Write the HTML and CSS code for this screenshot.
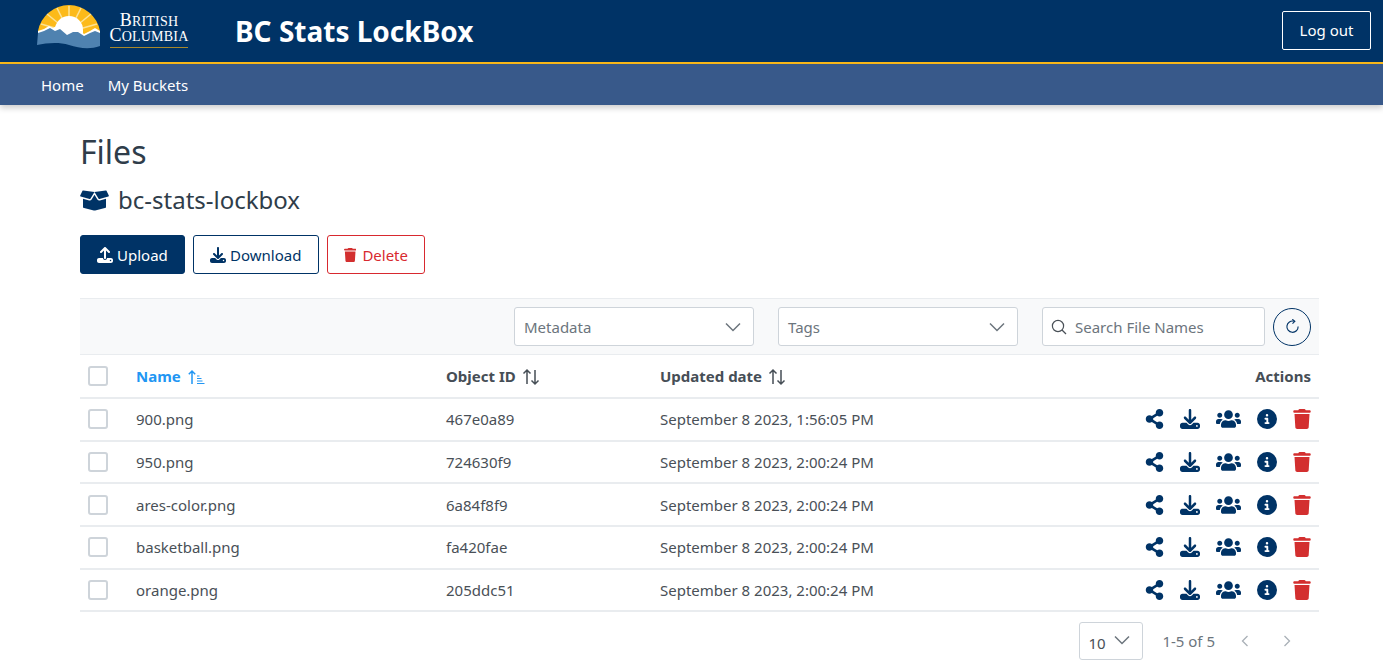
FILE: index.html
```html
<!DOCTYPE html>
<html lang="en">
<head>
<meta charset="utf-8">
<title>BC Stats LockBox</title>
<link rel="stylesheet" href="styles.css">
</head>
<body>
<svg class="defs" width="0" height="0" aria-hidden="true">
  <symbol id="i-share" viewBox="0 0 448 512"><path d="M352 320c-22.608 0-43.387 7.819-59.79 20.895l-102.486-64.054a96.551 96.551 0 0 0 0-41.683l102.486-64.054C308.613 184.181 329.392 192 352 192c53.019 0 96-42.981 96-96S405.019 0 352 0s-96 42.981-96 96c0 7.158.79 14.13 2.276 20.841L155.79 180.895C139.387 167.819 118.608 160 96 160c-53.019 0-96 42.981-96 96s42.981 96 96 96c22.608 0 43.387-7.819 59.79-20.895l102.486 64.054A96.301 96.301 0 0 0 256 416c0 53.019 42.981 96 96 96s96-42.981 96-96-42.981-96-96-96z"/></symbol>
  <symbol id="i-download" viewBox="0 0 512 512"><path d="M288 32c0-17.7-14.3-32-32-32s-32 14.3-32 32V274.7l-73.4-73.4c-12.5-12.5-32.8-12.5-45.3 0s-12.5 32.8 0 45.3l128 128c12.5 12.5 32.8 12.5 45.3 0l128-128c12.5-12.5 12.5-32.8 0-45.3s-32.8-12.5-45.3 0L288 274.7V32zM64 352c-35.3 0-64 28.7-64 64v32c0 35.3 28.7 64 64 64H448c35.3 0 64-28.7 64-64V416c0-35.3-28.7-64-64-64H346.5l-45.3 45.3c-25 25-65.5 25-90.5 0L165.5 352H64zm368 56a24 24 0 1 1 0 48 24 24 0 1 1 0-48z"/></symbol>
  <symbol id="i-upload" viewBox="0 0 512 512"><path d="M288 109.3V352c0 17.7-14.3 32-32 32s-32-14.3-32-32V109.3l-73.4 73.4c-12.5 12.5-32.8 12.5-45.3 0s-12.5-32.8 0-45.3l128-128c12.5-12.5 32.8-12.5 45.3 0l128 128c12.5 12.5 12.5 32.8 0 45.3s-32.8 12.5-45.3 0L288 109.3zM64 352H192c0 35.3 28.7 64 64 64s64-28.7 64-64H448c35.3 0 64 28.7 64 64v32c0 35.3-28.7 64-64 64H64c-35.3 0-64-28.7-64-64V416c0-35.3 28.7-64 64-64zM432 456a24 24 0 1 0 0-48 24 24 0 1 0 0 48z"/></symbol>
  <symbol id="i-trash" viewBox="0 0 448 512"><path d="M135.2 17.7L128 32H32C14.3 32 0 46.3 0 64S14.3 96 32 96H416c17.7 0 32-14.3 32-32s-14.3-32-32-32H320l-7.2-14.3C307.4 6.8 296.3 0 284.2 0H163.8c-12.1 0-23.2 6.8-28.6 17.7zM416 128H32L53.2 467c1.6 25.3 22.6 45 47.9 45H346.9c25.3 0 46.3-19.7 47.9-45L416 128z"/></symbol>
  <symbol id="i-info" viewBox="0 0 512 512"><path d="M256 512A256 256 0 1 0 256 0a256 256 0 1 0 0 512zM216 336h24V272H216c-13.3 0-24-10.7-24-24s10.7-24 24-24h48c13.3 0 24 10.7 24 24v88h8c13.3 0 24 10.7 24 24s-10.7 24-24 24H216c-13.3 0-24-10.7-24-24s10.7-24 24-24zm40-208a32 32 0 1 1 0 64 32 32 0 1 1 0-64z"/></symbol>
  <symbol id="i-users" viewBox="0 0 640 512"><path d="M96 224c35.3 0 64-28.7 64-64s-28.7-64-64-64-64 28.7-64 64 28.7 64 64 64zm448 0c35.3 0 64-28.7 64-64s-28.7-64-64-64-64 28.7-64 64 28.7 64 64 64zm32 32h-64c-17.6 0-33.5 7.1-45.1 18.6 40.3 22.1 68.9 62 75.1 109.4h66c17.7 0 32-14.3 32-32v-32c0-35.3-28.7-64-64-64zm-256 0c61.9 0 112-50.1 112-112S381.9 32 320 32 208 82.1 208 144s50.1 112 112 112zm76.8 32h-8.3c-20.8 10-43.9 16-68.5 16s-47.6-6-68.5-16h-8.3C179.6 288 128 339.6 128 403.2V432c0 26.5 21.5 48 48 48h288c26.5 0 48-21.5 48-48v-28.8c0-63.6-51.6-115.2-115.2-115.2zm-223.7-13.4C161.5 263.1 145.6 256 128 256H64c-35.3 0-64 28.7-64 64v32c0 17.7 14.3 32 32 32h65.9c6.3-47.4 34.9-87.3 75.2-109.4z"/></symbol>
  <symbol id="i-box" viewBox="0 0 640 512"><path d="M425.7 256c-16.9 0-32.8-9-41.4-23.4L320 126l-64.2 106.6c-8.7 14.5-24.6 23.5-41.5 23.5-4.5 0-9-.6-13.3-1.9L64 215v178c0 14.7 10 27.5 24.2 31l216.2 54.1c10.2 2.5 20.9 2.5 31 0L551.8 424c14.2-3.6 24.2-16.4 24.2-31V215l-137 39.1c-4.3 1.3-8.8 1.9-13.3 1.9zm212.6-112.2L586.8 41c-3.1-6.2-9.8-9.8-16.7-8.9L320 64l91.7 152.1c3.8 6.3 11.4 9.3 18.5 7.3l197.9-56.5c9.9-2.9 14.7-13.9 10.2-23.1zM53.2 41L1.7 143.8c-4.6 9.2.3 20.2 10.1 23l197.9 56.5c7.1 2 14.7-1 18.5-7.3L320 64 69.8 32.1c-6.9-.8-13.5 2.7-16.6 8.9z"/></symbol>
  <symbol id="i-sort" viewBox="0 0 18 18"><path d="M5 2v14M1.5 5.5 5 2l3.500 3.500M13 16V2M9.500 12.500 13 16l3.500-3.500" fill="none" stroke="currentColor" stroke-width="1.500"/></symbol>
  <symbol id="i-sort-up" viewBox="0 0 18 18"><path d="M5 3v13M1.800 6.200 5 3l3.200 3.200" fill="none" stroke="currentColor" stroke-width="1.500"/><path d="M10 8h2.500M10 10.500h4.500M10 13h5.500M10 15.500h7.500" fill="none" stroke="currentColor" stroke-width="1"/></symbol>
  <symbol id="i-chev" viewBox="0 0 16 10"><path d="M1 1.500 8 8.500l7-7" fill="none" stroke="currentColor" stroke-width="1.500"/></symbol>
</svg>

<header class="topbar">
  <div class="brand">
    <div class="logo">
      <svg class="logo-mark" viewBox="0 0 64 46" width="64" height="46" aria-hidden="true">
        <path d="M1 27A31.500 31.500 0 0 1 63 27V34H1z" fill="#fcba19"/>
        <g stroke="#fde9a8" stroke-width="1.600" opacity=".85">
          <path d="M32 28V2M32 28 20 4M32 28 44 4M32 28 10 10M32 28 54 10M32 28 4 20M32 28 60 20"/>
        </g>
        <path d="M18 26A14 14 0 0 1 46 26V32H18z" fill="#fff"/>
        <path d="M1 27 7 25 12 22 16 24 21 21 27 27 31 30 36 26 41 25 47 30 53 27 58 24 63 27V35H1z" fill="#fff"/>
        <path d="M1 29 7 27 13 24 18 27 23 25 30 31 36 28 41 28 47 32 53 29 58 27 63 29V42C52 46 42 44 32 41 22 38 10 39 0 41z" fill="#4f82b0"/>
      </svg>
      <div class="logo-text">
        <span class="logo-line">B<small>RITISH</small></span>
        <span class="logo-line logo-wide">C<small>OLUMBIA</small></span>
      </div>
    </div>
    <h1 class="app-title">BC Stats LockBox</h1>
  </div>
  <button class="logout">Log out</button>
</header>
<nav class="navbar">
  <a class="nav-link">Home</a>
  <a class="nav-link">My Buckets</a>
</nav>

<main class="content">
  <h2 class="page-title">Files</h2>
  <h3 class="bucket"><svg class="bucket-icon"><use href="#i-box"/></svg>bc-stats-lockbox</h3>
  <div class="actions">
    <button class="btn btn-primary"><svg class="btn-icon"><use href="#i-upload"/></svg>Upload</button>
    <button class="btn btn-outline"><svg class="btn-icon"><use href="#i-download"/></svg>Download</button>
    <button class="btn btn-danger"><svg class="btn-icon btn-icon-trash"><use href="#i-trash"/></svg>Delete</button>
  </div>

  <section class="filters">
    <div class="select"><span>Metadata</span><svg class="chev"><use href="#i-chev"/></svg></div>
    <div class="select"><span>Tags</span><svg class="chev"><use href="#i-chev"/></svg></div>
    <div class="search">
      <svg class="search-icon" viewBox="0 0 16 16"><circle cx="7" cy="7" r="5.600" fill="none" stroke="currentColor" stroke-width="1.200"/><path d="m11 11 4 4" stroke="currentColor" stroke-width="1.200"/></svg>
      <span>Search File Names</span>
    </div>
    <button class="refresh" aria-label="Refresh">
      <svg viewBox="0 0 16 16" width="15" height="15"><path d="M9.500 2.400A6 6 0 1 0 14 8" fill="none" stroke="currentColor" stroke-width="1.200"/><path d="M7.800 .3 10.500 2.500 8 5" fill="none" stroke="currentColor" stroke-width="1.200"/></svg>
    </button>
  </section>

  <table class="files">
    <thead>
      <tr>
        <th class="col-check"><span class="checkbox"></span></th>
        <th class="col-name sorted">Name <svg class="sort"><use href="#i-sort-up"/></svg></th>
        <th class="col-id">Object ID <svg class="sort"><use href="#i-sort"/></svg></th>
        <th class="col-date">Updated date <svg class="sort"><use href="#i-sort"/></svg></th>
        <th class="col-actions">Actions</th>
      </tr>
    </thead>
    <tbody>
      <tr>
        <td><span class="checkbox"></span></td><td>900.png</td><td>467e0a89</td><td>September 8 2023, 1:56:05 PM</td>
        <td class="row-actions"><svg class="ra ra-share"><use href="#i-share"/></svg><svg class="ra ra-dl"><use href="#i-download"/></svg><svg class="ra ra-users"><use href="#i-users"/></svg><svg class="ra ra-info"><use href="#i-info"/></svg><svg class="ra ra-trash"><use href="#i-trash"/></svg></td>
      </tr>
      <tr>
        <td><span class="checkbox"></span></td><td>950.png</td><td>724630f9</td><td>September 8 2023, 2:00:24 PM</td>
        <td class="row-actions"><svg class="ra ra-share"><use href="#i-share"/></svg><svg class="ra ra-dl"><use href="#i-download"/></svg><svg class="ra ra-users"><use href="#i-users"/></svg><svg class="ra ra-info"><use href="#i-info"/></svg><svg class="ra ra-trash"><use href="#i-trash"/></svg></td>
      </tr>
      <tr>
        <td><span class="checkbox"></span></td><td>ares-color.png</td><td>6a84f8f9</td><td>September 8 2023, 2:00:24 PM</td>
        <td class="row-actions"><svg class="ra ra-share"><use href="#i-share"/></svg><svg class="ra ra-dl"><use href="#i-download"/></svg><svg class="ra ra-users"><use href="#i-users"/></svg><svg class="ra ra-info"><use href="#i-info"/></svg><svg class="ra ra-trash"><use href="#i-trash"/></svg></td>
      </tr>
      <tr>
        <td><span class="checkbox"></span></td><td>basketball.png</td><td>fa420fae</td><td>September 8 2023, 2:00:24 PM</td>
        <td class="row-actions"><svg class="ra ra-share"><use href="#i-share"/></svg><svg class="ra ra-dl"><use href="#i-download"/></svg><svg class="ra ra-users"><use href="#i-users"/></svg><svg class="ra ra-info"><use href="#i-info"/></svg><svg class="ra ra-trash"><use href="#i-trash"/></svg></td>
      </tr>
      <tr>
        <td><span class="checkbox"></span></td><td>orange.png</td><td>205ddc51</td><td>September 8 2023, 2:00:24 PM</td>
        <td class="row-actions"><svg class="ra ra-share"><use href="#i-share"/></svg><svg class="ra ra-dl"><use href="#i-download"/></svg><svg class="ra ra-users"><use href="#i-users"/></svg><svg class="ra ra-info"><use href="#i-info"/></svg><svg class="ra ra-trash"><use href="#i-trash"/></svg></td>
      </tr>
    </tbody>
  </table>

  <div class="pager">
    <div class="per-page"><span>10</span><svg class="chev"><use href="#i-chev"/></svg></div>
    <span class="range">1-5 of 5</span>
    <svg class="pg" viewBox="0 0 8 12"><path d="M6.500 1 1.500 6l5 5" fill="none" stroke="currentColor" stroke-width="1.300"/></svg>
    <svg class="pg" viewBox="0 0 8 12"><path d="M1.500 1 6.500 6l-5 5" fill="none" stroke="currentColor" stroke-width="1.300"/></svg>
  </div>
</main>
</body>
</html>
```

FILE: styles.css
```css
* { box-sizing: border-box; }
html, body { margin: 0; padding: 0; height: 100%; overflow: hidden; }
body { font-family: "Noto Sans", "Open Sans", sans-serif; font-size: 16px; color: #313132; background: #fff; }
.defs { position: absolute; }

.topbar { height: 64px; background: #003366; border-bottom: 2px solid #fcba19; display: flex; align-items: center; justify-content: space-between; padding: 0 12px 0 37px; }
.brand { display: flex; align-items: center; gap: 36px; }
.logo { display: flex; align-items: flex-start; height: 62px; padding-top: 4px; }
.logo-mark { flex: none; }
.logo-text { display: flex; flex-direction: column; align-items: center; margin: 9px 0 0 -2px; color: #fff; font-family: "Liberation Serif", serif; line-height: 15px; width: 100px; border: 0; }
.logo-line { font-size: 18px; letter-spacing: .2px; }
.logo-line small { font-size: 14px; }
.logo-wide { border-bottom: 1px solid #a8882a; padding: 0 0 3px; margin-top: -1px; }
.app-title { margin: 0; color: #fff; font-size: 28px; line-height: 1; font-weight: 700; letter-spacing: 0; }
.logout { width: 89px; height: 39px; background: transparent; border: 1px solid #fff; border-radius: 2px; color: #fff; font: inherit; font-size: 15px; margin-bottom: 2px; }

.navbar { height: 41px; background: #38598a; display: flex; align-items: center; gap: 24px; padding: 0 41px; box-shadow: 0 3px 6px rgba(0,0,0,.2); position: relative; }
.nav-link { color: #fff; font-size: 15px; }

.content { padding: 0 64px 0 80px; }
.page-title { margin: 0; padding-top: 27px; font-size: 32px; line-height: 40px; font-weight: 400; color: #2f3d4a; }
.bucket { margin: 11px 0 0; display: flex; align-items: center; font-size: 24px; line-height: 34px; font-weight: 400; color: #2f3d4a; }
.bucket-icon { width: 29px; height: 23px; fill: #003366; margin-right: 9px; }
.actions { display: flex; gap: 8px; margin-top: 18px; }
.btn { height: 39px; padding: 0 16px; border-radius: 3px; display: flex; align-items: center; font: inherit; font-size: 15px; background: #fff; }
.btn-primary { width: 105px; background: #003366; border: 1px solid #003366; color: #fff; fill: #fff; }
.btn-outline { width: 126px; border: 1px solid #003366; color: #003366; fill: #003366; }
.btn-danger { width: 98px; border: 1px solid #d8292f; color: #d8292f; fill: #d32f2f; }
.btn-icon { width: 16px; height: 16px; margin-right: 4px; }
.btn-icon-trash { width: 14px; margin-right: 6px; }

.filters { margin-top: 24px; height: 57px; background: #f8f9fa; border-top: 1px solid #e9ecef; border-bottom: 1px solid #e9ecef; display: flex; align-items: center; justify-content: flex-end; padding: 0 8px 0 0; }
.select { width: 240px; height: 39px; background: #fff; border: 1px solid #ced4da; border-radius: 3px; display: flex; align-items: center; justify-content: space-between; padding: 0 12px 0 9px; font-size: 15px; color: #6c757d; margin-right: 24px; }
.chev { width: 16px; height: 10px; color: #6c757d; }
.search { width: 223px; height: 39px; background: #fff; border: 1px solid #ced4da; border-radius: 3px; display: flex; align-items: center; gap: 8px; padding-left: 8px; font-size: 15px; color: #6c757d; }
.search-icon { width: 16px; height: 16px; color: #495057; }
.refresh { width: 38px; height: 38px; margin-left: 8px; border-radius: 50%; background: transparent; border: 1px solid #003366; color: #003366; display: flex; align-items: center; justify-content: center; padding: 0; }

.files { width: 100%; border-collapse: collapse; table-layout: fixed; font-size: 15px; color: #495057; }
.files th { height: 43px; text-align: left; font-weight: 700; color: #464e56; border-bottom: 2px solid #e9ecef; font-size: 15px; padding: 0; vertical-align: middle; }
.files td { height: 42.700px; border-bottom: 2px solid #e9ecef; padding: 0; vertical-align: middle; }
.col-check { width: 56px; }
.col-name { width: 310px; }
.col-id { width: 214px; }
.col-actions { text-align: right !important; padding-right: 8px !important; }
.sorted { color: #2196f3 !important; }
.checkbox { display: block; width: 20px; height: 20px; margin-left: 8px; border: 2px solid #ced4da; border-radius: 3px; background: #fff; }
.sort { width: 18px; height: 18px; vertical-align: -4px; margin-left: 2px; }
.row-actions { text-align: right; padding-right: 8px !important; white-space: nowrap; line-height: 0; }
.ra { height: 20px; fill: #003366; vertical-align: middle; margin-left: 16px; }
.ra-share { width: 19px; }
.ra-dl { width: 20px; }
.ra-users { width: 25px; }
.ra-info { width: 20px; }
.ra-trash { width: 18px; fill: #d32f2f; }

.pager { display: flex; align-items: center; justify-content: flex-end; padding-right: 28px; margin-top: 10px; color: #6c757d; font-size: 15px; }
.per-page { width: 64px; height: 38px; border: 1px solid #ced4da; border-radius: 3px; display: flex; align-items: center; justify-content: space-between; padding: 3px 12px 0 8px; color: #495057; margin-right: 19px; }
.per-page .chev { margin-bottom: 6px; }
.range { margin-right: 26px; }
.pg { width: 8px; height: 12px; color: #a9b0b7; }
.pg + .pg { margin-left: 34px; }
```
